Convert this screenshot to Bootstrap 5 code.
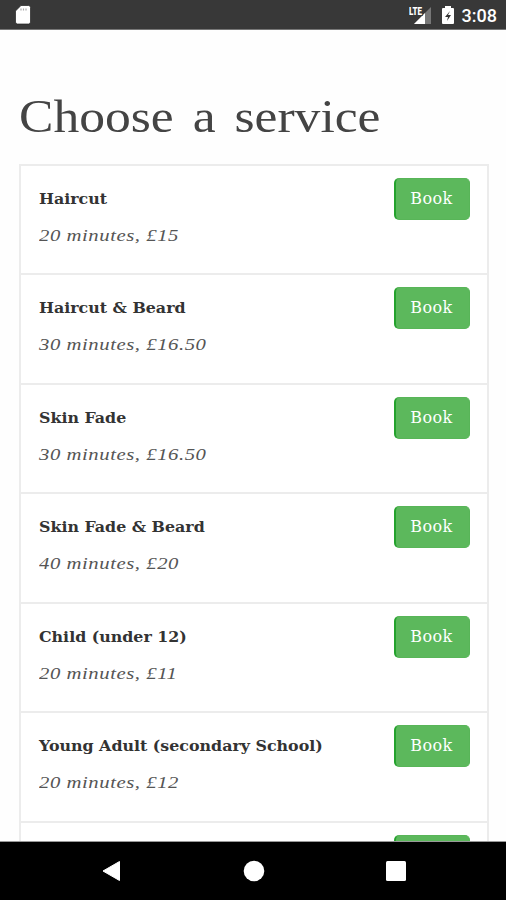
<!DOCTYPE html>
<html lang="en">
<head>
<meta charset="utf-8">
<meta name="viewport" content="width=device-width, initial-scale=1">
<title>Choose a service</title>
<link href="https://cdn.jsdelivr.net/npm/bootstrap@5.3.0/dist/css/bootstrap.min.css" rel="stylesheet">
<style>
body{font-family:"Liberation Serif",serif;color:#3c3c3c;background:#fefefe}
.status-bar{height:30px;background:#383838;border-bottom:1px solid #777;padding:0 9px 0 14px}
.clock{font:500 18px/30px Roboto,sans-serif;margin:2px 0 0 7px}
.page-body{padding:60px 17px 0 19px;min-height:0}
.page-title{font-size:46px;line-height:54px;margin-bottom:20px;color:#444;word-spacing:5.4px}
.stretch{display:inline-block;transform-origin:0 50%;transform:scaleX(1.121);white-space:nowrap}
.services{border:2px solid #ececec;background:#fff}
.service{height:109.5px;padding:12px 17px 0 18px;border-bottom:2px solid #ececec}
.service:first-child{height:109px}
.service-name{font:bold 15px/24px "DejaVu Serif",serif;margin-top:9px;color:#333}
.service-name .stretch{transform:scaleX(1.056)}
.service-info{font-size:17px;line-height:24px;font-style:italic;margin-top:13px;color:#555;letter-spacing:.44px}
.service-info .stretch{transform:scaleX(1.22)}
.btn-book{--bs-btn-bg:#5cb85c;--bs-btn-color:#fff;--bs-btn-border-color:#58b558;--bs-btn-hover-bg:#4cae4c;--bs-btn-hover-color:#fff;width:76px;height:42px;padding:0 2px 0 0;border-radius:5px;font:16px/38px "DejaVu Serif",serif;letter-spacing:.4px;border-left:2px solid #24a22d}
.nav-bar{height:58px;background:#000;box-shadow:0 -1px #999;padding:0 100px 0 102px}
</style>
</head>
<body>
<div class="d-flex flex-column vh-100 overflow-hidden">
<header class="status-bar d-flex align-items-center flex-shrink-0 text-white">
<svg width="18" height="22" viewBox="0 0 18 22" class="me-auto"><path d="M7 1.500h7.500q2 0 2 2V18q0 2-2 2H3.500q-2 0-2-2V7z" fill="#fff" stroke="#222" stroke-width=".7"/><path d="M7 4.500v2M9.500 4.500v2M12 4.500v2" stroke="#aaa" stroke-width="1.2"/></svg>
<svg width="24" height="22" viewBox="0 0 24 22"><path d="M22 3v17H5z" fill="#777"/><path d="M16 9v11H5z" fill="#fff"/><text x="0" y="10.500" font-family="Roboto" font-weight="900" font-size="10" textLength="13" lengthAdjust="spacingAndGlyphs" fill="#fff" stroke="#383838" stroke-width="2" paint-order="stroke">LTE</text></svg>
<svg width="14" height="20" viewBox="0 0 14 20" class="ms-2"><path d="M4 1h6v2h2q1 0 1 1v14q0 1-1 1H2q-1 0-1-1V4q0-1 1-1h2z" fill="#fff"/><path d="M9 6l-5 6h3l-1 4 4-6H7z" fill="#333"/></svg>
<span class="clock">3:08</span>
</header>
<main class="page-body flex-grow-1 overflow-hidden">
<h1 class="page-title fw-normal"><span class="stretch">Choose a service</span></h1>
<div class="services">
<div class="service d-flex justify-content-between"><div><div class="service-name"><span class="stretch">Haircut</span></div><div class="service-info"><span class="stretch">20 minutes, £15</span></div></div><button class="btn btn-book">Book</button></div>
<div class="service d-flex justify-content-between"><div><div class="service-name"><span class="stretch">Haircut &amp; Beard</span></div><div class="service-info"><span class="stretch">30 minutes, £16.50</span></div></div><button class="btn btn-book">Book</button></div>
<div class="service d-flex justify-content-between"><div><div class="service-name"><span class="stretch">Skin Fade</span></div><div class="service-info"><span class="stretch">30 minutes, £16.50</span></div></div><button class="btn btn-book">Book</button></div>
<div class="service d-flex justify-content-between"><div><div class="service-name"><span class="stretch">Skin Fade &amp; Beard</span></div><div class="service-info"><span class="stretch">40 minutes, £20</span></div></div><button class="btn btn-book">Book</button></div>
<div class="service d-flex justify-content-between"><div><div class="service-name"><span class="stretch">Child (under 12)</span></div><div class="service-info"><span class="stretch">20 minutes, £11</span></div></div><button class="btn btn-book">Book</button></div>
<div class="service d-flex justify-content-between"><div><div class="service-name"><span class="stretch">Young Adult (secondary School)</span></div><div class="service-info"><span class="stretch">20 minutes, £12</span></div></div><button class="btn btn-book">Book</button></div>
<div class="service d-flex justify-content-end"><button class="btn btn-book"></button></div>
</div>
</main>
<footer class="nav-bar d-flex align-items-center justify-content-between flex-shrink-0 position-relative">
<svg width="19" height="22" viewBox="0 0 19 22"><path d="M17.500 1.500v19L1 11z" fill="#fff" stroke="#fff" stroke-linejoin="round"/></svg>
<svg width="22" height="22" viewBox="0 0 22 22"><circle cx="11" cy="11" r="10.300" fill="#fff"/></svg>
<svg width="20" height="20" viewBox="0 0 20 20"><rect width="20" height="20" rx="1.500" fill="#fff"/></svg>
</footer>
</div>
<script src="https://cdn.jsdelivr.net/npm/bootstrap@5.3.0/dist/js/bootstrap.bundle.min.js"></script>
</body>
</html>
